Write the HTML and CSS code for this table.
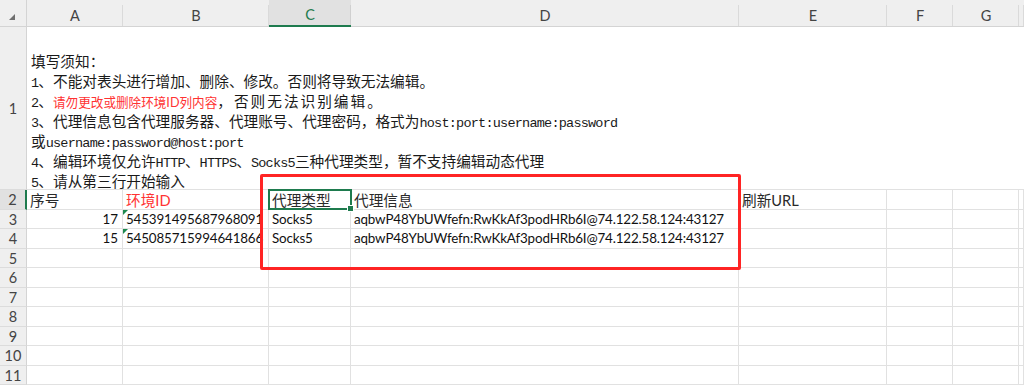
FILE: index.html
```html
<!DOCTYPE html>
<html lang="zh-CN">
<head>
<meta charset="utf-8">
<title>代理编辑模板</title>
<link rel="stylesheet" href="styles.css">
</head>
<body>
<div class="sheet">
  <div class="corner"><span class="tri"></span></div>
  <div class="ch">A</div>
  <div class="ch">B</div>
  <div class="ch sel">C</div>
  <div class="ch">D</div>
  <div class="ch">E</div>
  <div class="ch">F</div>
  <div class="ch">G</div>
  <div class="ch"></div>

  <div class="rh">1</div>
  <div class="notes">
    <div class="ln">填写须知：</div>
    <div class="ln"><span class="m">1</span>、不能对表头进行增加、删除、修改。否则将导致无法编辑。</div>
    <div class="ln"><span class="m">2</span>、<span class="red sm">请勿更改或删除环境<span class="s">ID</span>列内容</span><span class="wide">，否则无法识别编辑。</span></div>
    <div class="ln"><span class="m">3</span>、代理信息包含代理服务器、代理账号、代理密码，格式为<span class="m">host:port:username:password</span></div>
    <div class="ln">或<span class="m">username:password@host:port</span></div>
    <div class="ln"><span class="m">4</span>、编辑环境仅允许<span class="m">HTTP</span>、<span class="m">HTTPS</span>、<span class="m">Socks5</span>三种代理类型，暂不支持编辑动态代理</div>
    <div class="ln"><span class="m">5</span>、请从第三行开始输入</div>
  </div>

  <div class="rh sel">2</div>
  <div class="c t">序号</div>
  <div class="c t red">环境<span class="s">ID</span></div>
  <div class="c t">代理类型</div>
  <div class="c t">代理信息</div>
  <div class="c t">刷新<span class="s">URL</span></div>
  <div class="c"></div>
  <div class="c"></div>
  <div class="c"></div>

  <div class="rh">3</div>
  <div class="c num">17</div>
  <div class="c d flag">545391495687968091</div>
  <div class="c d">Socks5</div>
  <div class="c d">aqbwP48YbUWfefn:RwKkAf3podHRb6I@74.122.58.124:43127</div>
  <div class="c"></div>
  <div class="c"></div>
  <div class="c"></div>
  <div class="c"></div>

  <div class="rh">4</div>
  <div class="c num">15</div>
  <div class="c d flag">545085715994641866</div>
  <div class="c d">Socks5</div>
  <div class="c d">aqbwP48YbUWfefn:RwKkAf3podHRb6I@74.122.58.124:43127</div>
  <div class="c"></div>
  <div class="c"></div>
  <div class="c"></div>
  <div class="c"></div>

  <div class="rh">5</div>
  <div class="c"></div><div class="c"></div><div class="c"></div><div class="c"></div><div class="c"></div><div class="c"></div><div class="c"></div><div class="c"></div>
  <div class="rh">6</div>
  <div class="c"></div><div class="c"></div><div class="c"></div><div class="c"></div><div class="c"></div><div class="c"></div><div class="c"></div><div class="c"></div>
  <div class="rh">7</div>
  <div class="c"></div><div class="c"></div><div class="c"></div><div class="c"></div><div class="c"></div><div class="c"></div><div class="c"></div><div class="c"></div>
  <div class="rh">8</div>
  <div class="c"></div><div class="c"></div><div class="c"></div><div class="c"></div><div class="c"></div><div class="c"></div><div class="c"></div><div class="c"></div>
  <div class="rh">9</div>
  <div class="c"></div><div class="c"></div><div class="c"></div><div class="c"></div><div class="c"></div><div class="c"></div><div class="c"></div><div class="c"></div>
  <div class="rh">10</div>
  <div class="c"></div><div class="c"></div><div class="c"></div><div class="c"></div><div class="c"></div><div class="c"></div><div class="c"></div><div class="c"></div>
  <div class="rh">11</div>
  <div class="c"></div><div class="c"></div><div class="c"></div><div class="c"></div><div class="c"></div><div class="c"></div><div class="c"></div><div class="c"></div>

  <div class="active"><span class="handle"></span></div>
  <div class="redbox"></div>
</div>
</body>
</html>
```
FILE: styles.css
```css
html, body {
  margin: 0;
  padding: 0;
  background: #ffffff;
  overflow: hidden;
}

.sheet {
  position: relative;
  display: grid;
  grid-template-columns: 27px 96px 146px 82px 388px 148px 66px 66px 5px;
  grid-template-rows: 27px 163px 20px 19px 20px 19px 20px 19px 20px 19px 20px 19px;
  width: 1024px;
  overflow: hidden;
  font-family: "Lato", "Noto Sans CJK SC", sans-serif;
  color: #222;
}

.corner {
  position: relative;
  background: #efefef;
  border-right: 1px solid #d4d4d4;
  border-bottom: 1px solid #d4d4d4;
}

.tri {
  position: absolute;
  left: 9px;
  top: 14px;
  width: 6px;
  height: 6px;
  background: #6f6f6f;
  clip-path: polygon(100% 0, 100% 100%, 0 100%);
}

.ch {
  display: flex;
  align-items: center;
  justify-content: center;
  padding-top: 4px;
  box-sizing: border-box;
  background:
    linear-gradient(#dadada, #dadada) right 5px / 1px calc(100% - 5px) no-repeat,
    #efefef;
  border-bottom: 1px solid #d4d4d4;
  font-size: 14.5px;
  color: #444;
}

.ch.sel {
  background:
    linear-gradient(#d0d0d0, #d0d0d0) right 5px / 1px calc(100% - 5px) no-repeat,
    #e1e1e1;
  border-bottom: 2px solid #1e7b4e;
  color: #1e7b4e;
}

.rh {
  display: flex;
  align-items: center;
  justify-content: center;
  box-sizing: border-box;
  background: #efefef;
  border-right: 1px solid #d4d4d4;
  border-bottom: 1px solid #dcdcdc;
  font-size: 14.5px;
  color: #444;
}

.rh.sel {
  background: #e1e1e1;
  border-right: 2px solid #1e7b4e;
}

.c {
  box-sizing: border-box;
  border-right: 1px solid #e1e1e1;
  border-bottom: 1px solid #e1e1e1;
  white-space: nowrap;
  overflow: visible;
  position: relative;
}

.notes {
  grid-column: span 8;
  box-sizing: border-box;
  padding: 24px 0 0 4px;
  border-bottom: 1px solid #e1e1e1;
  font-family: "Noto Sans CJK SC", sans-serif;
  font-size: 14.67px;
  color: #1a1a1a;
}

.ln {
  height: 20px;
  line-height: 20px;
  white-space: nowrap;
}

.m {
  font-family: "Liberation Mono", monospace;
  font-size: 13.5px;
  letter-spacing: -0.77px;
}

.s {
  font-family: "Lato", sans-serif;
}

.red {
  color: #ff3333;
}

.sm {
  font-size: 12.6px;
}

.wide {
  letter-spacing: 2px;
}

.t {
  font-family: "Noto Sans CJK SC", sans-serif;
  font-size: 14.67px;
  line-height: 20px;
  padding-left: 3px;
  color: #2a2a2a;
}

.t.red {
  color: #ff3333;
}

.d {
  font-family: "Lato", sans-serif;
  font-size: 13.4px;
  letter-spacing: -0.15px;
  line-height: 19px;
  padding-left: 3px;
  color: #111;
}

.num {
  font-family: "Lato", sans-serif;
  font-size: 13.4px;
  line-height: 19px;
  text-align: right;
  padding-right: 4px;
  color: #111;
}

.flag::before {
  content: "";
  position: absolute;
  left: 0;
  top: 0;
  width: 5px;
  height: 5px;
  background: #1e8a4f;
  clip-path: polygon(0 0, 100% 0, 0 100%);
}

.active {
  position: absolute;
  left: 268px;
  top: 189px;
  width: 84px;
  height: 21px;
  box-sizing: border-box;
  border: 2px solid #1e7b4e;
}

.handle {
  position: absolute;
  right: -4px;
  bottom: -4px;
  width: 5px;
  height: 5px;
  background: #1e7b4e;
  border: 1px solid #fff;
}

.redbox {
  position: absolute;
  left: 260px;
  top: 174px;
  width: 481px;
  height: 96px;
  box-sizing: border-box;
  border: 3px solid #ff2424;
  border-radius: 2px;
}
```
